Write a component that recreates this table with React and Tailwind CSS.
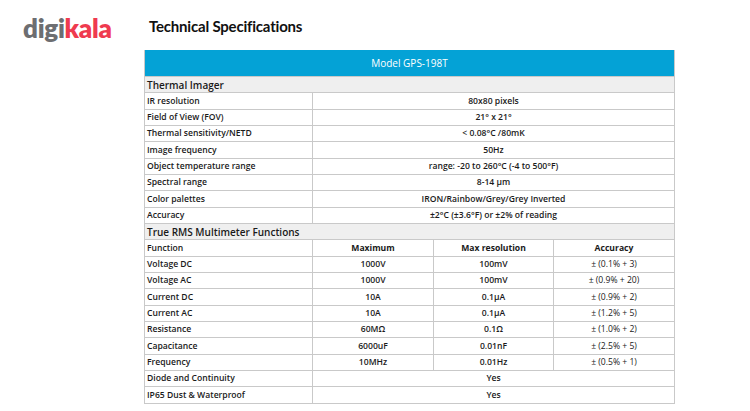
import React from "react";

const thermal = [
  ["IR resolution", "80x80 pixels"],
  ["Field of View (FOV)", "21° x 21°"],
  ["Thermal sensitivity/NETD", "< 0.08°C /80mK"],
  ["Image frequency", "50Hz"],
  ["Object temperature range", "range: -20 to 260°C (-4 to 500°F)"],
  ["Spectral range", "8-14 μm"],
  ["Color palettes", "IRON/Rainbow/Grey/Grey Inverted"],
  ["Accuracy", "±2°C (±3.6°F) or ±2% of reading"],
];

const multi = [
  ["Voltage DC", "1000V", "100mV", "± (0.1% + 3)"],
  ["Voltage AC", "1000V", "100mV", "± (0.9% + 20)"],
  ["Current DC", "10A", "0.1μA", "± (0.9% + 2)"],
  ["Current AC", "10A", "0.1μA", "± (1.2% + 5)"],
  ["Resistance", "60MΩ", "0.1Ω", "± (1.0% + 2)"],
  ["Capacitance", "6000uF", "0.01nF", "± (2.5% + 5)"],
  ["Frequency", "10MHz", "0.01Hz", "± (0.5% + 1)"],
];

const rowCls = "flex h-[16.33px] border-t border-[#c9c9c9] text-[8.6px] leading-none text-[#1a1a1a]";
const labelCls = "w-[168px] shrink-0 border-r border-[#c9c9c9] flex items-center pl-[2px] font-semibold";

export default function App() {
  return (
    <div
      className="w-[750px] h-[411px] bg-white flex overflow-hidden"
      style={{ fontFamily: '"Open Sans", "Noto Sans", sans-serif' }}
    >
      <div className="w-[144px] shrink-0 pl-[23px] pt-[15px]">
        <div
          className="text-[26px] font-extrabold leading-none tracking-[-0.3px]"
          style={{ fontFamily: 'Lato, "Open Sans", sans-serif' }}
        >
          <span className="text-[#6d6e71]">digi</span>
          <span className="text-[#ef3a4f]">kala</span>
        </div>
      </div>
      <div className="flex flex-col">
        <div className="h-[50px] pl-[5px] pt-[19px]">
          <h1
            className="text-[15px] font-bold leading-none text-[#111] tracking-[-0.2px]"
            style={{ fontFamily: 'Lato, "Open Sans", sans-serif' }}
          >
            Technical Specifications
          </h1>
        </div>
        <div className="w-[531px] border-x border-b border-[#c9c9c9]">
          <div className="h-[26px] bg-[#04a2d6] flex items-center justify-center text-white text-[10px] font-medium">
            Model GPS-198T
          </div>
          <div className={rowCls + " bg-[#efefef] items-center pl-[2px] text-[10px] font-semibold"}>
            Thermal Imager
          </div>
          {thermal.map(([l, v]) => (
            <div key={l} className={rowCls}>
              <div className={labelCls}>{l}</div>
              <div className="flex-1 flex items-center justify-center font-semibold">{v}</div>
            </div>
          ))}
          <div className={rowCls + " bg-[#efefef] items-center pl-[2px] text-[10px] font-semibold"}>
            True RMS Multimeter Functions
          </div>
          <div className={rowCls + " font-bold"}>
            <div className={labelCls + " font-bold"}>Function</div>
            <div className="w-[121px] shrink-0 border-r border-[#c9c9c9] flex items-center justify-center">Maximum</div>
            <div className="w-[120px] shrink-0 border-r border-[#c9c9c9] flex items-center justify-center">Max resolution</div>
            <div className="flex-1 flex items-center justify-center">Accuracy</div>
          </div>
          {multi.map(([a, b, c, d]) => (
            <div key={a} className={rowCls}>
              <div className={labelCls}>{a}</div>
              <div className="w-[121px] shrink-0 border-r border-[#c9c9c9] flex items-center justify-center font-semibold">{b}</div>
              <div className="w-[120px] shrink-0 border-r border-[#c9c9c9] flex items-center justify-center font-semibold">{c}</div>
              <div className="flex-1 flex items-center justify-center font-medium">{d}</div>
            </div>
          ))}
          {["Diode and Continuity", "IP65 Dust & Waterproof"].map((l) => (
            <div key={l} className={rowCls}>
              <div className={labelCls}>{l}</div>
              <div className="flex-1 flex items-center justify-center font-semibold">Yes</div>
            </div>
          ))}
        </div>
      </div>
    </div>
  );
}
